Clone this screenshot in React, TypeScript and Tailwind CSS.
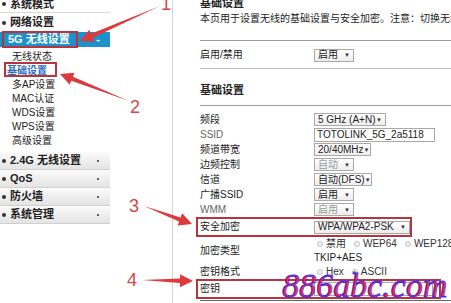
import React from 'react'

const font = { fontFamily: '"Liberation Sans", "Noto Sans CJK SC", sans-serif' }

type Pt = [number, number]

// tapered red annotation arrow, tail -> tip
const Arrow = ({ tail, tip }: { tail: Pt; tip: Pt }) => {
  const dx = tip[0] - tail[0]
  const dy = tip[1] - tail[1]
  const len = Math.hypot(dx, dy)
  const ux = dx / len
  const uy = dy / len
  const nx = -uy
  const ny = ux
  const L = 13
  const W = 6.5
  const w = 2.2
  const bx = tip[0] - ux * L
  const by = tip[1] - uy * L
  const pts: Pt[] = [
    tail,
    [bx + nx * w, by + ny * w],
    [bx + nx * W, by + ny * W],
    tip,
    [bx - nx * W, by - ny * W],
    [bx - nx * w, by - ny * w],
  ]
  return <polygon points={pts.map((p) => p.join(',')).join(' ')} fill="#dc3a3c" />
}

const Select = ({ label, w, muted }: { label: string; w: string; muted?: boolean }) => (
  <div
    className={`${w} shrink-0 h-[13px] flex items-center justify-between border border-[#a9a9a9] bg-linear-to-b from-white to-[#ededed] px-[3px] text-[10px] leading-none whitespace-nowrap ${
      muted ? 'text-[#9a9a9a]' : 'text-[#222]'
    }`}
  >
    <span>{label}</span>
    <span className="text-[6px] text-[#333]">▼</span>
  </div>
)

const Radio = ({ checked }: { checked?: boolean }) => (
  <span className="shrink-0 w-[6px] h-[6px] rounded-full border border-[#c4c4c4] bg-[#f0f0f0] flex items-center justify-center">
    {checked && <span className="w-[3px] h-[3px] rounded-full bg-[#777]" />}
  </span>
)

const Row = ({ label, h = 'h-[15px]', muted, children }: { label: string; h?: string; muted?: boolean; children?: React.ReactNode }) => (
  <div className={`${h} flex items-center whitespace-nowrap`}>
    <div className={`w-[114px] shrink-0 ${muted ? 'text-[#666]' : 'text-[#222]'}`}>{label}</div>
    {children}
  </div>
)

const GroupRow = ({ label }: { label: string }) => (
  <div className="h-[18px] flex items-center pl-[2px] pr-[11px] bg-linear-to-b from-[#fbfbfb] to-[#e4e4e4] border-b border-[#d0d0d0] text-[11px] font-bold text-[#222]">
    <span className="w-[4px] h-[4px] rounded-full bg-[#333] mr-[4px]" />
    <span className="flex-1">{label}</span>
    <span className="w-[2px] h-[2px] rounded-full bg-[#333]" />
  </div>
)

const SubItem = ({ label, active }: { label: string; active?: boolean }) => (
  <div className="h-[14px] flex items-center pl-[12px] text-[10px] text-[#222]">
    {active ? (
      <span className="relative -ml-[5px] text-[#2a6cc0] underline font-bold">
        基础设置
        <span className="absolute -left-[3px] -top-[1px] w-[53px] h-[15px] border-2 border-[#b5353f]" />
      </span>
    ) : (
      label
    )}
  </div>
)

export default function App() {
  return (
    <div className="relative w-[451px] h-[303px] overflow-hidden bg-white flex" style={font}>
      {/* sidebar */}
      <aside className="w-[110px] shrink-0 flex flex-col -mt-[4px]">
        <div className="h-[17px] flex items-center pl-[2px] border-b border-[#d8d8d8] text-[11px] font-bold text-[#222]">
          <span className="w-[4px] h-[4px] rounded-full bg-[#333] mr-[4px]" />
          系统模式
        </div>
        <div className="h-[19px] flex items-center pl-[2px] text-[11px] font-bold text-[#222]">
          <span className="w-[4px] h-[4px] rounded-full bg-[#333] mr-[4px]" />
          网络设置
        </div>
        <div className="relative h-[15px] flex items-center pl-[8px] pr-[10px] bg-[#1c92cc] text-[11px] font-bold text-white">
          <span className="flex-1">5G 无线设置</span>
          <span>-</span>
          <span className="absolute left-[2px] -top-[1px] w-[76px] h-[17px] border-2 border-[#b5353f]" />
        </div>
        <div className="h-[2px]" />
        <SubItem label="无线状态" />
        <SubItem label="基础设置" active />
        <SubItem label="多AP设置" />
        <SubItem label="MAC认证" />
        <SubItem label="WDS设置" />
        <SubItem label="WPS设置" />
        <SubItem label="高级设置" />
        <div className="h-[5px]" />
        <GroupRow label="2.4G 无线设置" />
        <GroupRow label="QoS" />
        <GroupRow label="防火墙" />
        <GroupRow label="系统管理" />
      </aside>

      {/* content */}
      <main className="ml-[62px] flex-1 min-w-0 border-l border-[#d4d4d4] pl-[27px] flex flex-col text-[10px] leading-none">
        <div className="h-[14px] -mt-[4px] flex items-center text-[11px] font-bold text-[#222]">基础设置</div>
        <div className="h-[14px] mt-[2px] flex items-center whitespace-nowrap text-[#222]">
          本页用于设置无线的基础设置与安全加密。注意：切换无线频段后需要重新设置
        </div>
        <div className="mt-[14px] border-t border-[#9c9c9c]" />
        <div className="mt-[7px]">
          <Row label="启用/禁用" h="h-[14px]">
            <Select label="启用" w="w-[40px]" />
          </Row>
        </div>
        <div className="mt-[6px] border-t border-[#bdbdbd]" />
        <div className="h-[14px] mt-[14px] flex items-center text-[11px] font-bold text-[#222]">基础设置</div>
        <div className="mt-[8px] border-t border-[#9c9c9c]" />
        <div className="mt-[6px] flex flex-col">
          <Row label="频段">
            <Select label="5 GHz (A+N)" w="w-[72px]" />
          </Row>
          <Row label="SSID" muted>
            <div className="shrink-0 w-[121px] h-[14px] flex items-center border border-[#a9a9a9] px-[2px] text-[#222]">TOTOLINK_5G_2a5118</div>
          </Row>
          <Row label="频道带宽">
            <Select label="20/40MHz" w="w-[57px]" />
          </Row>
          <Row label="边频控制">
            <Select label="自动" w="w-[40px]" muted />
          </Row>
          <Row label="信道">
            <Select label="自动(DFS)" w="w-[58px]" />
          </Row>
          <Row label="广播SSID">
            <Select label="启用" w="w-[40px]" />
          </Row>
          <Row label="WMM" muted>
            <Select label="启用" w="w-[40px]" muted />
          </Row>
          <div className="relative">
            <Row label="安全加密" h="h-[20px]">
              <Select label="WPA/WPA2-PSK" w="w-[96px]" />
            </Row>
            <span className="absolute -left-[4px] top-0 w-[216px] h-[20px] border-2 border-[#b5353f]" />
          </div>
          <Row label="加密类型" h="h-[28px]">
            <div className="flex flex-col">
              <div className="h-[14px] flex items-center gap-[3px] pl-[3px] text-[#333]">
                <Radio />
                <span className="mr-[5px]">禁用</span>
                <Radio />
                <span className="mr-[5px]">WEP64</span>
                <Radio />
                <span>WEP128</span>
              </div>
              <div className="h-[14px] flex items-center text-[#222]">TKIP+AES</div>
            </div>
          </Row>
          <Row label="密钥格式" h="h-[14px]">
            <div className="flex items-center gap-[3px] pl-[3px] text-[#333]">
              <Radio />
              <span className="mr-[5px]">Hex</span>
              <Radio checked />
              <span>ASCII</span>
            </div>
          </Row>
          <div className="relative">
            <Row label="密钥" h="h-[20px]">
              <div className="shrink-0 w-[119px] h-[14px] border border-[#a9a9a9]" />
            </Row>
            <span className="absolute -left-[4px] top-0 w-[245px] h-[20px] border-2 border-[#b5353f]" />
          </div>
          <div className="mt-[1px] border-t border-[#666]" />
        </div>
      </main>

      {/* annotations */}
      <svg className="absolute inset-0 pointer-events-none" width="451" height="303">
        <Arrow tail={[160, 6]} tip={[80, 41]} />
        <Arrow tail={[129, 101]} tip={[60, 74]} />
        <Arrow tail={[144, 206]} tip={[192, 224]} />
        <Arrow tail={[142, 280]} tip={[193, 281]} />
      </svg>
      <span className="absolute left-[161px] -top-[5px] text-[18px] leading-none text-[#d24747]">1</span>
      <span className="absolute left-[130px] top-[98px] text-[18px] leading-none text-[#d24747]">2</span>
      <span className="absolute left-[129px] top-[197px] text-[18px] leading-none text-[#d24747]">3</span>
      <span className="absolute left-[127px] top-[271px] text-[18px] leading-none text-[#d24747]">4</span>
      <span
        className="absolute left-[282px] top-[269px] text-[34px] leading-none italic text-[#ff1f1f] [-webkit-text-stroke:0.8px_#2b2bff] whitespace-nowrap"
        style={{ fontFamily: '"Liberation Serif", serif' }}
      >
        886abc.com
      </span>
    </div>
  )
}
